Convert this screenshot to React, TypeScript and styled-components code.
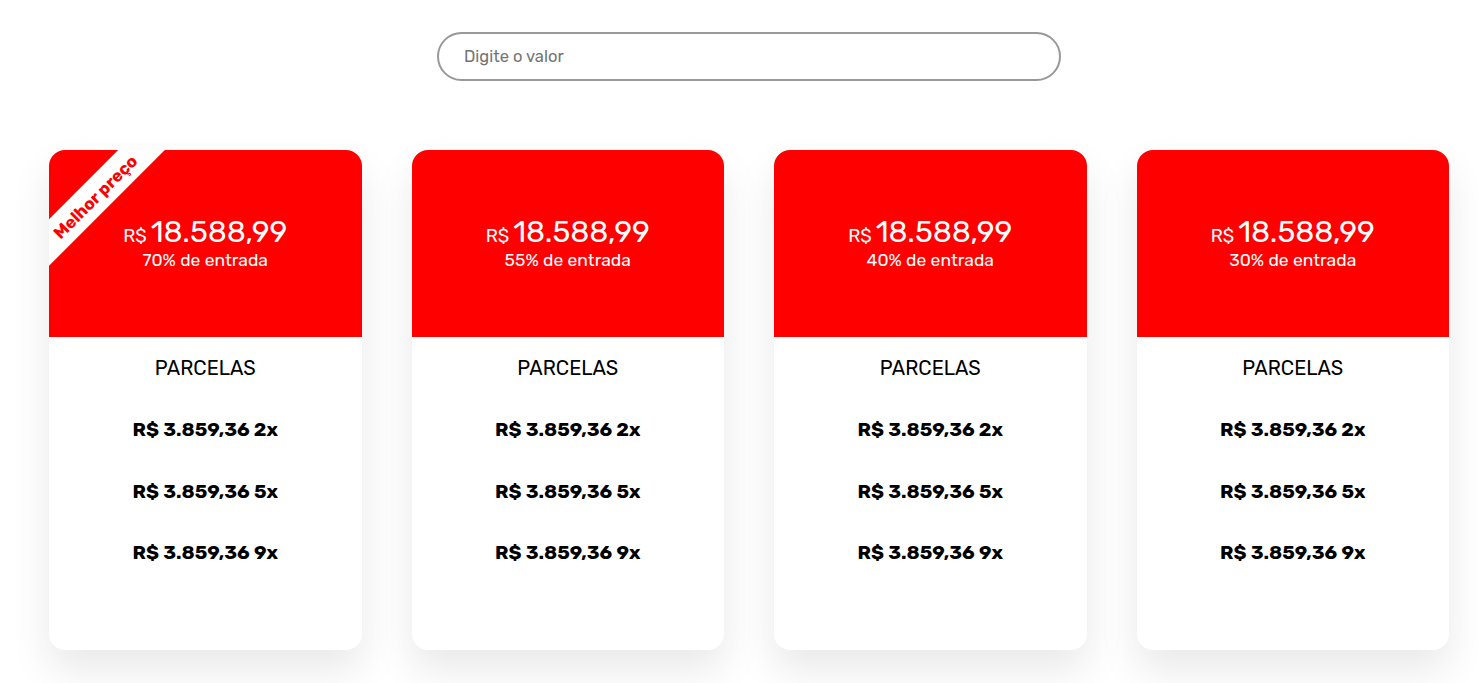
import React from "react";
import styled, { createGlobalStyle } from "styled-components";

const GlobalStyle = createGlobalStyle`
  html, body {
    margin: 0;
    padding: 0;
    background: #ffffff;
    font-family: Rubik, Inter, "Noto Sans", sans-serif;
  }
  * { box-sizing: border-box; }
`;

const Page = styled.div`
  width: 1400px;
  min-height: 683px;
  margin-left: 49px;
  padding-top: 32px;
  display: flex;
  flex-direction: column;
  align-items: center;
`;

const SearchInput = styled.input`
  width: 624px;
  height: 49px;
  border: 2px solid #999999;
  border-radius: 25px;
  padding: 0 25px;
  font-family: Rubik, Inter, "Noto Sans", sans-serif;
  font-size: 16.5px;
  color: #333;
  outline: none;
  &::placeholder {
    color: #747474;
  }
`;

const Grid = styled.div`
  margin-top: 69px;
  width: 100%;
  display: grid;
  grid-template-columns: repeat(4, 312.5px);
  column-gap: 50px;
`;

const Card = styled.div`
  position: relative;
  height: 500px;
  border-radius: 16px;
  background: #ffffff;
  overflow: hidden;
  box-shadow: 0 20px 40px rgba(0, 0, 0, 0.09);
  display: flex;
  flex-direction: column;
`;

const Header = styled.div`
  height: 187px;
  background: #ff0000;
  color: #ffffff;
  display: flex;
  flex-direction: column;
  align-items: center;
  padding-top: 67px;
`;

const Price = styled.div`
  display: flex;
  align-items: baseline;
  gap: 4px;
  line-height: 1;
`;

const Currency = styled.span`
  font-size: 18.5px;
`;

const Amount = styled.span`
  font-size: 30px;
`;

const Entrada = styled.div`
  margin-top: 3px;
  font-size: 17.5px;
  line-height: 20px;
`;

const Body = styled.div`
  display: flex;
  flex-direction: column;
  align-items: center;
  padding-top: 19px;
  color: #000;
`;

const Title = styled.div`
  font-size: 20px;
  line-height: 24px;
  margin-bottom: 38px;
`;

const Row = styled.div`
  font-size: 19.5px;
  font-weight: 700;
  line-height: 24px;
  margin-bottom: 37.5px;
`;

const Ribbon = styled.div`
  position: absolute;
  left: -54px;
  top: 30px;
  width: 200px;
  height: 33px;
  background: #ffffff;
  color: #ff0000;
  font-weight: 700;
  font-size: 17px;
  display: flex;
  align-items: center;
  justify-content: center;
  transform: rotate(-45deg);
`;

const plans = [
  { pct: 70, best: true },
  { pct: 55 },
  { pct: 40 },
  { pct: 30 },
];

const rows = ["2x", "5x", "9x"];

export default function App() {
  return (
    <>
      <GlobalStyle />
      <Page>
        <SearchInput placeholder="Digite o valor" />
        <Grid>
          {plans.map((p) => (
            <Card key={p.pct}>
              {p.best && <Ribbon>Melhor preço</Ribbon>}
              <Header>
                <Price>
                  <Currency>R$</Currency>
                  <Amount>18.588,99</Amount>
                </Price>
                <Entrada>{p.pct}% de entrada</Entrada>
              </Header>
              <Body>
                <Title>PARCELAS</Title>
                {rows.map((r) => (
                  <Row key={r}>R$ 3.859,36 {r}</Row>
                ))}
              </Body>
            </Card>
          ))}
        </Grid>
      </Page>
    </>
  );
}
